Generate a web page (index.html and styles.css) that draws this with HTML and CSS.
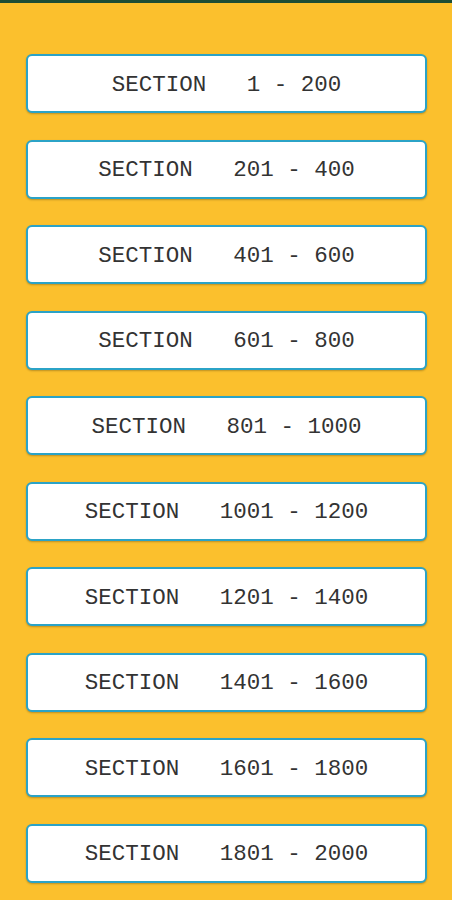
FILE: index.html
```html
<!DOCTYPE html>
<html>
<head>
<meta charset="utf-8">
<link rel="stylesheet" href="styles.css">
</head>
<body>
<div class="topbar"></div>
<main class="list">
  <button class="card">SECTION&nbsp;&nbsp;&nbsp;1&nbsp;-&nbsp;200</button>
  <button class="card">SECTION&nbsp;&nbsp;&nbsp;201&nbsp;-&nbsp;400</button>
  <button class="card">SECTION&nbsp;&nbsp;&nbsp;401&nbsp;-&nbsp;600</button>
  <button class="card">SECTION&nbsp;&nbsp;&nbsp;601&nbsp;-&nbsp;800</button>
  <button class="card">SECTION&nbsp;&nbsp;&nbsp;801&nbsp;-&nbsp;1000</button>
  <button class="card">SECTION&nbsp;&nbsp;&nbsp;1001&nbsp;-&nbsp;1200</button>
  <button class="card">SECTION&nbsp;&nbsp;&nbsp;1201&nbsp;-&nbsp;1400</button>
  <button class="card">SECTION&nbsp;&nbsp;&nbsp;1401&nbsp;-&nbsp;1600</button>
  <button class="card">SECTION&nbsp;&nbsp;&nbsp;1601&nbsp;-&nbsp;1800</button>
  <button class="card">SECTION&nbsp;&nbsp;&nbsp;1801&nbsp;-&nbsp;2000</button>
</main>
</body>
</html>
```
FILE: styles.css
```css
html, body {
  margin: 0;
  padding: 0;
  background: #fbc02d;
  height: 100%;
  overflow: hidden;
}
.topbar {
  height: 3px;
  background: #1d4d35;
}
.list {
  display: flex;
  flex-direction: column;
  gap: 26.55px;
  padding: 51px 25px 0 26px;
}
.card {
  height: 59px;
  width: 100%;
  box-sizing: border-box;
  background: #ffffff;
  border: 2px solid #2ba3c7;
  border-radius: 6px;
  box-shadow: 0 1px 2px rgba(0, 0, 0, 0.25);
  font-family: "Courier New", "Nimbus Mono PS", "FreeMono", "Liberation Mono", monospace;
  font-size: 22.5px;
  color: #333333;
  text-align: center;
  padding: 2px 0 0 0;
  display: flex;
  align-items: center;
  justify-content: center;
}
```
